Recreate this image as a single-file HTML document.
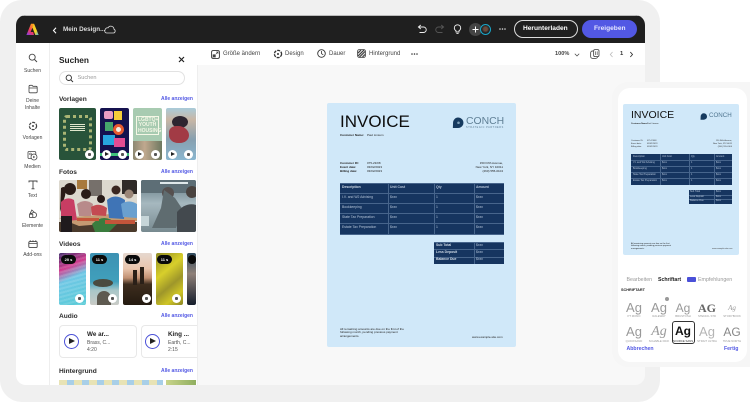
<!DOCTYPE html>
<html><head><meta charset="utf-8"><style>
*{box-sizing:border-box;margin:0;padding:0}
html,body{width:750px;height:402px;background:#fff;overflow:hidden}
body{position:relative;font-family:"Liberation Sans",sans-serif;color:#2c2c2c}
.a{position:absolute}
.t{position:absolute;white-space:nowrap;line-height:1}
.h{font-size:6.6px;font-weight:bold;color:#2c2c2c}
.l{font-size:5px;color:#5258e4;font-weight:bold;left:161px}
.rl{font-size:5px;color:#444;text-align:center;width:33px;left:16px;line-height:7.2px;white-space:normal}
.tb{font-size:6px;color:#444}
.th{border-radius:2px;overflow:hidden;position:absolute;filter:blur(.25px)}
.c{position:absolute;border-radius:50%;background:#fff;width:9px;height:9px}
.c:after{content:"";position:absolute;left:3px;top:3px;width:3px;height:3px;background:#555;border-radius:1px}
.p:after{left:3.2px;top:2.2px;width:0;height:0;background:none;border-left:4px solid #222;border-top:2.3px solid transparent;border-bottom:2.3px solid transparent;border-radius:0}
.b{position:absolute;background:#0a0a0a;color:#fff;font-size:4px;font-weight:bold;border-radius:5px;height:9px;line-height:9px;text-align:center}
svg{position:absolute;overflow:visible}
.tbl{position:absolute;background:#163560}
.cell{position:absolute;color:#b4c4d8;white-space:nowrap;line-height:1}
.ln{position:absolute;background:#47658c}
.ag{position:absolute;text-align:center;color:#999;line-height:1}
.cap{position:absolute;text-align:center;color:#999;font-size:2.8px;white-space:nowrap;line-height:1}
</style></head><body>
<div class="a" style="left:0;top:0;width:660px;height:402px;background:#f0f0f0;border-radius:22px"></div>
<div class="a" style="left:16px;top:15px;width:629px;height:370px;background:#f8f8f8;border-radius:10px;overflow:hidden">
<div class="a" style="left:0;top:0;width:629px;height:27.5px;background:#1f1f1f;border-top:1px solid #bbb"></div>
<div class="a" style="left:0;top:27.5px;width:629px;height:1.5px;background:#111"></div>
<div class="a" style="left:0;top:28px;width:629px;height:22px;background:#fff"></div>
<div class="a" style="left:0;top:28px;width:182px;height:342px;background:#fff"></div>
<div class="a" style="left:33px;top:28px;width:1px;height:342px;background:#eee"></div>
<div class="a" style="left:181px;top:50px;width:1px;height:320px;background:#eee"></div>
</div>

<!-- top bar -->
<svg style="left:26px;top:23px" width="13" height="13" viewBox="0 0 13 13"><defs><linearGradient id="g" x1="0" y1="1" x2="1" y2="0"><stop offset="0" stop-color="#7b3ff2"/><stop offset=".35" stop-color="#f03a5f"/><stop offset=".7" stop-color="#ff9a1f"/><stop offset="1" stop-color="#ffd11f"/></linearGradient><linearGradient id="g2" x1="0" y1="0" x2="1" y2="1"><stop offset="0" stop-color="#f5c623"/><stop offset=".6" stop-color="#f5d623"/><stop offset="1" stop-color="#43b6e8"/></linearGradient></defs><path d="M5 .8H8L12.6 12H9.4L6.5 4.6 4.6 9H7.2L8 12H.4Z" fill="url(#g)"/><path d="M8 .8L12.6 12H9.4L6.5 4.6Z" fill="url(#g2)"/></svg>
<svg style="left:52px;top:26.5px" width="6" height="7" viewBox="0 0 6 7"><path d="M4 .8L1.5 3.5 4 6.2" fill="none" stroke="#fff" stroke-width="1.1"/></svg>
<div class="t" style="left:63px;top:26.7px;font-size:6.3px;color:#ddd;font-weight:bold">Mein Design...</div>
<svg style="left:104px;top:25px" width="12" height="9" viewBox="0 0 12 9"><path d="M3 8H9.5A2 2 0 0 0 10 4.2 3.2 3.2 0 0 0 4 2.8 2.6 2.6 0 0 0 1 5 2 2 0 0 0 3 8Z" fill="none" stroke="#ddd" stroke-width=".8"/></svg>
<svg style="left:417px;top:24px" width="10" height="10" viewBox="0 0 10 10"><path d="M3.8 1L1.4 3 3.8 5M1.4 3H6.5A2.7 2.7 0 0 1 6.5 8.5H2.5" fill="none" stroke="#eee" stroke-width=".9"/></svg>
<svg style="left:435px;top:24px" width="10" height="10" viewBox="0 0 10 10"><path d="M6.2 1L8.6 3 6.2 5M8.6 3H3.5A2.7 2.7 0 0 0 3.5 8.5H7.5" fill="none" stroke="#555" stroke-width=".9"/></svg>
<svg style="left:453px;top:24px" width="9" height="11" viewBox="0 0 9 11"><path d="M3 8H6V6.8C7.2 6 7.7 5 7.7 4A3.2 3.2 0 0 0 1.3 4C1.3 5 1.8 6 3 6.8ZM3.4 9.6H5.6" fill="none" stroke="#eee" stroke-width=".9"/></svg>
<div class="a" style="left:469px;top:23px;width:13px;height:13px;border-radius:50%;background:#444"></div>
<svg style="left:472px;top:26px" width="7" height="7" viewBox="0 0 7 7"><path d="M3.5 .5V6.5M.5 3.5H6.5" stroke="#fff" stroke-width="1"/></svg>
<div class="a" style="left:480px;top:24px;width:11px;height:11px;border-radius:50%;background:radial-gradient(circle at 50% 45%,#6a4a3c 0 28%,#222 55%);border:1.3px solid #1aa6c9"></div>
<svg style="left:499px;top:28px" width="7" height="2" viewBox="0 0 7 2"><circle cx="1" cy="1" r=".8" fill="#ddd"/><circle cx="3.5" cy="1" r=".8" fill="#ddd"/><circle cx="6" cy="1" r=".8" fill="#ddd"/></svg>
<div class="a" style="left:514px;top:20px;width:64px;height:18px;border-radius:9px;border:1.2px solid #ddd"></div>
<div class="t" style="left:523px;top:25.7px;font-size:6.6px;font-weight:bold;color:#fff">Herunterladen</div>
<div class="a" style="left:582px;top:20px;width:55px;height:18px;border-radius:9px;background:#5258e4"></div>
<div class="t" style="left:594px;top:25.7px;font-size:6.6px;font-weight:bold;color:#e4e6ff">Freigeben</div>

<!-- toolbar -->
<svg style="left:211px;top:49.5px" width="9" height="9" viewBox="0 0 9 9"><rect x=".6" y=".6" width="7.8" height="7.8" rx="1.5" fill="none" stroke="#333" stroke-width=".9"/><rect x="1.7" y="4.4" width="3" height="3" fill="#444"/><path d="M5 4L7 2M5.2 2H7V3.8" fill="none" stroke="#444" stroke-width=".7"/></svg>
<div class="t tb" style="left:223px;top:50.5px">Größe ändern</div>
<svg style="left:273px;top:49px" width="10" height="10" viewBox="0 0 10 10"><circle cx="5" cy="5" r="3.6" fill="none" stroke="#333" stroke-width="1.3" stroke-dasharray="3 1"/><circle cx="5" cy="5" r="1" fill="#333"/></svg>
<div class="t tb" style="left:285px;top:50.5px">Design</div>
<svg style="left:317px;top:49px" width="9" height="9" viewBox="0 0 9 9"><circle cx="4.5" cy="4.5" r="3.8" fill="none" stroke="#333" stroke-width=".9"/><path d="M4.5 2V4.7L6.3 5.8" fill="none" stroke="#333" stroke-width=".8"/></svg>
<div class="t tb" style="left:329px;top:50.5px">Dauer</div>
<svg style="left:357px;top:49px" width="9" height="9" viewBox="0 0 9 9"><rect x=".5" y=".5" width="8" height="8" rx="2" fill="#ddd" stroke="#444" stroke-width=".8"/><path d="M1 4L4 1M1 7L7 1M2.5 8L8 2.5M5.5 8L8 5.5" stroke="#333" stroke-width=".9"/></svg>
<div class="t tb" style="left:369px;top:50.5px">Hintergrund</div>
<svg style="left:411px;top:53px" width="7" height="2" viewBox="0 0 7 2"><circle cx="1" cy="1" r=".8" fill="#333"/><circle cx="3.5" cy="1" r=".8" fill="#333"/><circle cx="6" cy="1" r=".8" fill="#333"/></svg>
<div class="t" style="left:555px;top:52px;font-size:5.6px;font-weight:bold;color:#444">100%</div>
<svg style="left:574px;top:52.5px" width="6" height="4" viewBox="0 0 6 4"><path d="M.8 .8L3 3 5.2 .8" fill="none" stroke="#444" stroke-width=".7"/></svg>
<svg style="left:590px;top:49px" width="10" height="10" viewBox="0 0 10 10"><rect x=".6" y="2" width="7" height="7.4" rx="2" fill="none" stroke="#555" stroke-width=".9"/><rect x="3.6" y=".6" width="5.4" height="7" rx="1.5" fill="#fff" stroke="#555" stroke-width=".9"/><path d="M5.4 2.4V6M7.2 2.4V6" stroke="#555" stroke-width=".7"/></svg>
<svg style="left:609px;top:51px" width="5" height="7" viewBox="0 0 5 7"><path d="M3.5 1L1.3 3.5 3.5 6" fill="none" stroke="#bbb" stroke-width=".8"/></svg>
<div class="t" style="left:620px;top:52px;font-size:5.8px;font-weight:bold;color:#333">1</div>
<svg style="left:629px;top:51px" width="5" height="7" viewBox="0 0 5 7"><path d="M1.3 1L3.5 3.5 1.3 6" fill="none" stroke="#333" stroke-width=".9"/></svg>

<!-- rail -->
<svg style="left:28px;top:53px" width="10" height="10" viewBox="0 0 10 10"><circle cx="4.2" cy="4.2" r="3" fill="none" stroke="#444" stroke-width=".9"/><path d="M6.4 6.4L9 9" stroke="#444" stroke-width="1"/></svg>
<div class="t rl" style="top:67.5px">Suchen</div>
<svg style="left:28px;top:84px" width="10" height="10" viewBox="0 0 10 10"><path d="M1 2.5Q1 1.3 2.2 1.3H4L5 2.3H8Q9.2 2.3 9.2 3.5V7.6Q9.2 8.8 8 8.8H2.2Q1 8.8 1 7.6ZM1 4H9.2" fill="none" stroke="#444" stroke-width=".8"/></svg>
<div class="t rl" style="top:97.5px">Deine<br>Inhalte</div>
<svg style="left:28px;top:121px" width="10" height="10" viewBox="0 0 10 10"><circle cx="5" cy="5" r="3.6" fill="none" stroke="#444" stroke-width="1.2" stroke-dasharray="3 1"/><circle cx="5" cy="5" r="1" fill="#444"/></svg>
<div class="t rl" style="top:134.5px">Vorlagen</div>
<svg style="left:27px;top:150px" width="11" height="11" viewBox="0 0 11 11"><path d="M2 1.5H7.5Q8.8 1.5 8.8 2.8V4.5M4.5 8.5H2Q1 8.5 1 7.5V2.5Q1 1.5 2 1.5" fill="none" stroke="#444" stroke-width=".8"/><circle cx="7" cy="7" r="3" fill="#fff" stroke="#444" stroke-width=".8"/><path d="M6.2 5.8L8.2 7 6.2 8.2Z" fill="#444"/><circle cx="3.5" cy="4" r=".9" fill="none" stroke="#444" stroke-width=".6"/></svg>
<div class="t rl" style="top:163.5px">Medien</div>
<svg style="left:28px;top:180px" width="10" height="10" viewBox="0 0 10 10"><path d="M1 2.4V1H9V2.4M5 1V8.8M3.5 8.8H6.5" fill="none" stroke="#444" stroke-width=".9"/></svg>
<div class="t rl" style="top:193px">Text</div>
<svg style="left:28px;top:209px" width="10" height="10" viewBox="0 0 10 10"><path d="M4.2 1L6.6 4.2H1.8Z" fill="none" stroke="#444" stroke-width=".8" transform="rotate(-10 4 3)"/><circle cx="6" cy="6" r="2.6" fill="#fff" stroke="#444" stroke-width=".8"/><rect x="1.6" y="5.2" width="3.2" height="3.2" fill="#fff" stroke="#444" stroke-width=".8"/></svg>
<div class="t rl" style="top:222.5px">Elemente</div>
<svg style="left:28px;top:238.5px" width="10" height="10" viewBox="0 0 10 10"><rect x=".8" y="2.6" width="8.4" height="6" rx="1.2" fill="none" stroke="#444" stroke-width=".9"/><path d="M2.2 2.6V1.2M5 2.6V1.2M7.8 2.6V1.2M1 4.6H9" stroke="#444" stroke-width=".8"/></svg>
<div class="t rl" style="top:252px">Add-ons</div>

<!-- panel -->
<div class="t" style="left:59px;top:56px;font-size:8.3px;font-weight:bold;color:#222">Suchen</div>
<svg style="left:177.5px;top:55.5px" width="7" height="7" viewBox="0 0 7 7"><path d="M1 1L6 6M6 1L1 6" stroke="#222" stroke-width="1.2"/></svg>
<div class="a" style="left:59px;top:71px;width:126px;height:14px;border-radius:7px;border:1px solid #e2e2e2"></div>
<svg style="left:65px;top:73.5px" width="9" height="9" viewBox="0 0 9 9"><circle cx="3.8" cy="3.8" r="2.7" fill="none" stroke="#333" stroke-width=".9"/><path d="M5.8 5.8L8 8" stroke="#333" stroke-width="1"/></svg>
<div class="t" style="left:77.5px;top:75.5px;font-size:5.6px;color:#999">Suchen</div>

<div class="t h" style="left:59px;top:97px">Vorlagen</div>
<div class="t l" style="top:97px">Alle anzeigen</div>
<div class="th" style="left:59px;top:108px;width:37px;height:52px;background:#28533a"><div class="a" style="left:4px;top:7px;width:29px;height:36px;border:3px dotted #a9b474;border-radius:4px"></div><div class="a" style="left:11px;top:16px;width:15px;height:8px;background:repeating-linear-gradient(#e0e6cc 0 1px,transparent 1px 2px)"></div></div>
<div class="c" style="left:85px;top:150px"></div>
<div class="th" style="left:100px;top:108px;width:29px;height:52px;background:#15124f"><div class="a" style="left:4px;top:3px;width:9px;height:8px;background:#e99cc4;border-radius:2px"></div><div class="a" style="left:14px;top:3px;width:8px;height:9px;background:#f5cd39"></div><div class="a" style="left:5px;top:14px;width:8px;height:9px;background:#46a46c"></div><div class="a" style="left:13px;top:16px;width:11px;height:11px;background:#f1efe6;border-radius:50%;border:3px solid #e85a2e"></div><div class="a" style="left:3px;top:27px;width:12px;height:10px;background:#27a6df"></div><div class="a" style="left:14px;top:30px;width:11px;height:9px;background:#e34c92"></div><div class="a" style="left:0;top:45px;width:29px;height:3px;background:#40c17c"></div></div>
<div class="c p" style="left:101.5px;top:150px"></div><div class="c" style="left:118px;top:150px"></div>
<div class="th" style="left:133px;top:108px;width:29px;height:52px;background:#a8cbb1"><div class="a" style="left:3px;top:8px;width:23px;height:19px;border:.5px solid #f5f7e6;background:#a8cbb1"></div><div class="t" style="left:5px;top:9.5px;font-size:5px;font-weight:bold;color:#f3f6e5;line-height:5.6px;text-align:center;width:19px">LGBTQ+<br>YOUTH<br>HOUSING</div><div class="a" style="left:0;top:33px;width:29px;height:19px;background:linear-gradient(90deg,#8d8872,#c0a88e 40%,#6d7860)"></div></div>
<div class="c p" style="left:134.5px;top:150px"></div><div class="c" style="left:151px;top:150px"></div>
<div class="th" style="left:166px;top:108px;width:30px;height:52px;background:linear-gradient(#a9cbd9,#c9b7a6 22%,#87a0b0 60%,#8bb7d0)"><div class="a" style="left:6px;top:8px;width:16px;height:12px;background:#2d2530;border-radius:50%"></div><div class="a" style="left:3px;top:18px;width:20px;height:17px;background:#a23b45;border-radius:40% 60% 50% 50%"></div></div>
<div class="c p" style="left:167.5px;top:150px"></div><div class="c" style="left:184px;top:150px"></div>

<div class="t h" style="left:59px;top:169.5px">Fotos</div>
<div class="t l" style="top:169.5px">Alle anzeigen</div>
<div class="th" style="left:59px;top:180px;width:78px;height:52px;background:#d8d3c8">
<svg style="left:0;top:0" width="78" height="52" viewBox="0 0 78 52"><rect width="78" height="52" fill="#dcd8ce"/><rect x="18" y="0" width="10" height="9" fill="#a87a3e"/><rect x="30" y="0" width="13" height="16" fill="#76706b"/><rect x="63" y="0" width="15" height="14" fill="#2f2a28"/><path d="M0 42H78V52H0Z" fill="#4a3a2c"/><path d="M0 38L78 32V41L20 46Z" fill="#c49a72"/><path d="M33 44Q45 32 58 44L50 52H36Z" fill="#3a7c3e"/><path d="M18 38H40V41H18ZM46 40H76V44H46Z" fill="#c4553a"/><circle cx="11" cy="9" r="6" fill="#2a1c18"/><path d="M2 8Q8 4 6 16L1 32Z" fill="#2a1c18"/><path d="M2 22Q8 16 15 20L18 40 8 41 2 36Z" fill="#c83d63"/><path d="M2 36H13V52H2Z" fill="#1f1a1d"/><circle cx="27" cy="14" r="5" fill="#2a1c18"/><path d="M18 24Q26 18 34 24L32 36 20 36Z" fill="#b88a8a"/><circle cx="42" cy="19" r="4" fill="#271917"/><path d="M32 27Q40 22 48 28L47 36 33 35Z" fill="#c44a52"/><circle cx="57" cy="10" r="4.5" fill="#3a2620"/><path d="M48 20Q56 13 66 20L65 39 50 38Z" fill="#3f74b6"/><circle cx="70" cy="14" r="4.5" fill="#9a8678"/><path d="M62 24Q70 19 78 24V38L64 37Z" fill="#6aa0cf"/></svg></div>
<div class="th" style="left:141px;top:180px;width:55px;height:52px;background:linear-gradient(#5f7580,#a6b8bf 45%,#77898f)">
<svg style="left:0;top:0" width="55" height="52" viewBox="0 0 55 52"><rect x="0" y="0" width="55" height="13" fill="#5d6e76"/><rect x="19" y="2" width="28" height="2" fill="#dfe8ea"/><circle cx="27" cy="13" r="6" fill="#56504f"/><path d="M23 10L20 28 11 48H35L42 30 34 18Z" fill="#5f6c70"/><circle cx="51" cy="12" r="6" fill="#4a4340"/><path d="M36 32Q45 22 55 25V52H36Z" fill="#43494e"/><rect x="0" y="36" width="8" height="10" fill="#c6d5d8"/></svg></div>

<div class="t h" style="left:59px;top:241.5px">Videos</div>
<div class="t l" style="top:241.5px">Alle anzeigen</div>
<div class="th" style="left:59px;top:253px;width:27px;height:52px;background:repeating-linear-gradient(165deg,transparent 0 2px,rgba(255,255,255,.12) 2px 4px),linear-gradient(155deg,#402a6a 0,#d13d8f 28%,#6fc7e5 48%,#58cbd6 100%)"></div>
<div class="th" style="left:90px;top:253px;width:29px;height:52px;background:linear-gradient(#3d92b3,#40a0bc 55%,#a9c7c8 72%,#c9cbc6)"><div class="a" style="left:3px;top:26px;width:20px;height:8px;background:#4a4b3f;border-radius:50%"></div><div class="a" style="left:7px;top:38px;width:14px;height:14px;background:#5e5a50;border-radius:50% 50% 0 0"></div></div>
<div class="th" style="left:123px;top:253px;width:29px;height:52px;background:linear-gradient(#e6d8cf,#e9c5ad 30%,#c19072 48%,#3d2d1e 60%,#241a10)"><div class="a" style="left:10px;top:17px;width:4px;height:15px;background:#2a2018"></div><div class="a" style="left:17px;top:14px;width:4px;height:17px;background:#2a2018"></div></div>
<div class="th" style="left:156px;top:253px;width:27px;height:52px;background:linear-gradient(140deg,#8f8a25,#d8cf2b 35%,#9e962a 60%,#cfc526 80%,#8a8424)"></div>
<div class="th" style="left:187px;top:253px;width:9px;height:52px;background:linear-gradient(#2f4a5e,#8f8078 40%,#151d2c)"></div>
<div class="b" style="left:61px;top:255px;width:15px">20 s</div>
<div class="b" style="left:92px;top:255px;width:15px">11 s</div>
<div class="b" style="left:125px;top:255px;width:15px">14 s</div>
<div class="b" style="left:157px;top:255px;width:15px">11 s</div>
<div class="b" style="left:188px;top:255px;width:8px"></div>
<div class="c" style="left:75px;top:294px"></div><div class="c" style="left:108px;top:294px"></div><div class="c" style="left:141.5px;top:294px"></div><div class="c" style="left:172px;top:294px"></div>

<div class="t h" style="left:59px;top:314px">Audio</div>
<div class="t l" style="top:314px">Alle anzeigen</div>
<div class="a" style="left:59px;top:325px;width:78px;height:33px;border:1px solid #e8e8e8;border-radius:4px"></div>
<div class="a" style="left:141px;top:325px;width:56px;height:33px;border:1px solid #e8e8e8;border-right:none;border-radius:4px 0 0 4px"></div>
<div class="a" style="left:63.5px;top:334px;width:15px;height:15px;border-radius:50%;border:1.5px solid #4a50d8"></div>
<div class="a" style="left:68.5px;top:338px;width:0;height:0;border-left:6px solid #222;border-top:3.5px solid transparent;border-bottom:3.5px solid transparent"></div>
<div class="a" style="left:145px;top:334px;width:15px;height:15px;border-radius:50%;border:1.5px solid #4a50d8"></div>
<div class="a" style="left:150px;top:338px;width:0;height:0;border-left:6px solid #222;border-top:3.5px solid transparent;border-bottom:3.5px solid transparent"></div>
<div class="t" style="left:87px;top:331.5px;font-size:6.3px;font-weight:bold;color:#222">We ar...</div>
<div class="t" style="left:87px;top:340.5px;font-size:5px;color:#555">Brass, C...</div>
<div class="t" style="left:87px;top:347.5px;font-size:5px;color:#555">4:20</div>
<div class="t" style="left:168px;top:331.5px;font-size:6.3px;font-weight:bold;color:#222">King ...</div>
<div class="t" style="left:168px;top:340.5px;font-size:5px;color:#555">Earth, C...</div>
<div class="t" style="left:168px;top:347.5px;font-size:5px;color:#555">2:15</div>

<div class="t h" style="left:59px;top:369px">Hintergrund</div>
<div class="t l" style="top:369px">Alle anzeigen</div>
<div class="a" style="left:59px;top:380px;width:104px;height:5px;background:repeating-linear-gradient(90deg,#e8e3b5 0 8px,#a8cfe8 8px 15px)"></div>
<div class="a" style="left:166px;top:380px;width:30px;height:5px;background:linear-gradient(90deg,#c9d48a,#8fae5f)"></div>

<!-- invoice -->
<div class="a" style="left:327px;top:103px;width:189px;height:244px;background:#d0e8f9;border-radius:2px"></div>
<div class="t" style="left:340px;top:113px;font-size:17px;color:#0c0c0c">INVOICE</div>
<svg style="left:452px;top:116.5px" width="13" height="11.5" viewBox="0 0 15 13"><path d="M1 12.5H7A6 6 0 1 0 1.2 7Z" fill="#163a5f"/><circle cx="7.5" cy="6.5" r="1.5" fill="#7f9fb8"/></svg>
<div class="t" style="left:466px;top:116.5px;font-size:10.4px;color:#5f7f95">CONCH</div>
<div class="t" style="left:466px;top:126.5px;font-size:2.4px;color:#5a7a92;letter-spacing:.6px">STRATEGIC PARTNERS</div>
<div class="t" style="left:340px;top:134px;font-size:3px;font-weight:bold;color:#222">Customer Name:</div>
<div class="t" style="left:367px;top:134px;font-size:3px;color:#222">Paul Linsum</div>
<div class="t" style="left:340px;top:160.5px;font-size:3px;font-weight:bold;color:#222;line-height:4.2px;white-space:normal;width:25px">Customer ID:<br>Event date:<br>Billing date:</div>
<div class="t" style="left:367px;top:160.5px;font-size:3px;color:#222;line-height:4.2px;white-space:normal;width:25px">075-23/08<br>03/02/2023<br>03/02/2023</div>
<div class="t" style="left:463px;top:160.5px;width:40px;font-size:3px;color:#222;line-height:4.2px;text-align:right;white-space:normal">150 Fifth Avenue,<br>New York, NY 10011<br>(260) 555-0104</div>

<div class="tbl" style="left:340px;top:183px;width:164px;height:51px"></div>
<div class="ln" style="left:340px;top:183px;width:164px;height:.5px"></div><div class="ln" style="left:340px;top:193px;width:164px;height:.5px"></div><div class="ln" style="left:340px;top:203px;width:164px;height:.5px"></div><div class="ln" style="left:340px;top:213px;width:164px;height:.5px"></div><div class="ln" style="left:340px;top:223px;width:164px;height:.5px"></div><div class="ln" style="left:340px;top:233.5px;width:164px;height:.5px"></div>
<div class="ln" style="left:388px;top:183px;width:.5px;height:51px"></div><div class="ln" style="left:434px;top:183px;width:.5px;height:51px"></div><div class="ln" style="left:474px;top:183px;width:.5px;height:51px"></div>
<div class="cell" style="left:342px;top:185.5px;font-size:3.4px;color:#d0dbe7;font-weight:bold">Description</div><div class="cell" style="left:390px;top:185.5px;font-size:3.4px;font-weight:bold">Unit Cost</div><div class="cell" style="left:436px;top:185.5px;font-size:3.4px;font-weight:bold">Qty</div><div class="cell" style="left:476px;top:185.5px;font-size:3.4px;font-weight:bold">Amount</div>
<div class="cell" style="left:342px;top:195.5px;font-size:3.4px">I.V. and W2 Advising</div><div class="cell" style="left:390px;top:195.5px;font-size:3.4px">$xxx</div><div class="cell" style="left:436px;top:195.5px;font-size:3.4px">1</div><div class="cell" style="left:476px;top:195.5px;font-size:3.4px">$xxx</div>
<div class="cell" style="left:342px;top:205.5px;font-size:3.4px">Bookkeeping</div><div class="cell" style="left:390px;top:205.5px;font-size:3.4px">$xxx</div><div class="cell" style="left:436px;top:205.5px;font-size:3.4px">1</div><div class="cell" style="left:476px;top:205.5px;font-size:3.4px">$xxx</div>
<div class="cell" style="left:342px;top:215.5px;font-size:3.4px">State Tax Preparation</div><div class="cell" style="left:390px;top:215.5px;font-size:3.4px">$xxx</div><div class="cell" style="left:436px;top:215.5px;font-size:3.4px">1</div><div class="cell" style="left:476px;top:215.5px;font-size:3.4px">$xxx</div>
<div class="cell" style="left:342px;top:225.5px;font-size:3.4px">Estate Tax Preparation</div><div class="cell" style="left:390px;top:225.5px;font-size:3.4px">$xxx</div><div class="cell" style="left:436px;top:225.5px;font-size:3.4px">1</div><div class="cell" style="left:476px;top:225.5px;font-size:3.4px">$xxx</div>

<div class="tbl" style="left:434px;top:242px;width:70px;height:22px"></div>
<div class="ln" style="left:434px;top:242px;width:70px;height:.5px"></div><div class="ln" style="left:434px;top:249px;width:70px;height:.5px"></div><div class="ln" style="left:434px;top:256.5px;width:70px;height:.5px"></div><div class="ln" style="left:474px;top:242px;width:.5px;height:22px"></div>
<div class="cell" style="left:436px;top:243.7px;font-size:3.4px;font-weight:bold;color:#d0dbe7">Sub Total</div><div class="cell" style="left:476px;top:243.7px;font-size:3.4px">$xxx</div>
<div class="cell" style="left:436px;top:251px;font-size:3.4px;font-weight:bold;color:#d0dbe7">Less Deposit</div><div class="cell" style="left:476px;top:251px;font-size:3.4px">$xxx</div>
<div class="cell" style="left:436px;top:258px;font-size:3.4px;font-weight:bold;color:#d0dbe7">Balance Due</div><div class="cell" style="left:476px;top:258px;font-size:3.4px">$xxx</div>
<div class="t" style="left:340px;top:327.5px;font-size:3px;color:#222;line-height:3.6px">All remaining amounts are due on the first of the<br>following month, pending previous payment<br>arrangements.</div>
<div class="t" style="left:472px;top:335.5px;font-size:3px;color:#222">www.example-site.com</div>

<!-- phone -->
<div class="a" style="left:612px;top:82px;width:138px;height:285px;background:#f6f6f6;border-radius:16px 0 0 16px"></div>
<div class="a" style="left:618px;top:88px;width:129px;height:274px;background:#fff;border-radius:12px"></div>
<div class="a" style="left:623px;top:104px;width:116px;height:151px;background:#d0e8f9;border-radius:2px"></div>
<div class="t" style="left:631px;top:109.5px;font-size:10.5px;color:#111">INVOICE</div>
<svg style="left:700px;top:113px" width="8" height="7" viewBox="0 0 15 13"><path d="M1 12.5H7A6 6 0 1 0 1.2 7Z" fill="#163a5f"/></svg>
<div class="t" style="left:709px;top:113px;font-size:6.2px;color:#4f7590">CONCH</div>
<div class="t" style="left:631px;top:123px;font-size:2.1px;font-weight:bold;color:#222">Customer Name:</div>
<div class="t" style="left:647px;top:123px;font-size:2.1px;color:#222">Paul Linsum</div>
<div class="t" style="left:631px;top:140px;font-size:2.1px;color:#333;line-height:2.8px;white-space:normal;width:16px">Customer ID:<br>Event date:<br>Billing date:</div>
<div class="t" style="left:647px;top:140px;font-size:2.1px;color:#333;line-height:2.8px;white-space:normal;width:16px">075-23/08<br>03/02/2023<br>03/02/2023</div>
<div class="t" style="left:705px;top:140px;width:27px;font-size:2.1px;color:#333;line-height:2.8px;text-align:right;white-space:normal">150 Fifth Avenue,<br>New York, NY 10011<br>(260) 555-0104</div>
<div class="tbl" style="left:631px;top:154px;width:101px;height:30.5px"></div>
<div class="ln" style="left:631px;top:160px;width:101px;height:.5px"></div><div class="ln" style="left:631px;top:166px;width:101px;height:.5px"></div><div class="ln" style="left:631px;top:172px;width:101px;height:.5px"></div><div class="ln" style="left:631px;top:178px;width:101px;height:.5px"></div>
<div class="ln" style="left:660px;top:154px;width:.5px;height:30.5px"></div><div class="ln" style="left:689px;top:154px;width:.5px;height:30.5px"></div><div class="ln" style="left:714px;top:154px;width:.5px;height:30.5px"></div>
<div class="cell" style="left:633px;top:155.5px;font-size:2.4px">Description</div><div class="cell" style="left:662px;top:155.5px;font-size:2.4px">Unit Cost</div><div class="cell" style="left:691px;top:155.5px;font-size:2.4px">Qty</div><div class="cell" style="left:716px;top:155.5px;font-size:2.4px">Amount</div>
<div class="cell" style="left:633px;top:161.5px;font-size:2.4px">I.V. and W2 Advising</div><div class="cell" style="left:662px;top:161.5px;font-size:2.4px">$xxx</div><div class="cell" style="left:691px;top:161.5px;font-size:2.4px">1</div><div class="cell" style="left:716px;top:161.5px;font-size:2.4px">$xxx</div>
<div class="cell" style="left:633px;top:167.5px;font-size:2.4px">Bookkeeping</div><div class="cell" style="left:662px;top:167.5px;font-size:2.4px">$xxx</div><div class="cell" style="left:691px;top:167.5px;font-size:2.4px">1</div><div class="cell" style="left:716px;top:167.5px;font-size:2.4px">$xxx</div>
<div class="cell" style="left:633px;top:173.5px;font-size:2.4px">State Tax Preparation</div><div class="cell" style="left:662px;top:173.5px;font-size:2.4px">$xxx</div><div class="cell" style="left:691px;top:173.5px;font-size:2.4px">1</div><div class="cell" style="left:716px;top:173.5px;font-size:2.4px">$xxx</div>
<div class="cell" style="left:633px;top:179.5px;font-size:2.4px">Estate Tax Preparation</div><div class="cell" style="left:662px;top:179.5px;font-size:2.4px">$xxx</div><div class="cell" style="left:691px;top:179.5px;font-size:2.4px">1</div><div class="cell" style="left:716px;top:179.5px;font-size:2.4px">$xxx</div>
<div class="tbl" style="left:689px;top:190px;width:43px;height:14px"></div>
<div class="ln" style="left:689px;top:194.5px;width:43px;height:.5px"></div><div class="ln" style="left:689px;top:199px;width:43px;height:.5px"></div><div class="ln" style="left:714px;top:190px;width:.5px;height:14px"></div>
<div class="cell" style="left:690px;top:191px;font-size:2.4px">Sub Total</div><div class="cell" style="left:716px;top:191px;font-size:2.4px">$xxx</div>
<div class="cell" style="left:690px;top:195.5px;font-size:2.4px">Less Deposit</div><div class="cell" style="left:716px;top:195.5px;font-size:2.4px">$xxx</div>
<div class="cell" style="left:690px;top:200px;font-size:2.4px">Balance Due</div><div class="cell" style="left:716px;top:200px;font-size:2.4px">$xxx</div>
<div class="t" style="left:631px;top:243px;font-size:2.1px;color:#222;line-height:2.4px">All remaining amounts are due on the first<br>following month, pending previous payment<br>arrangements.</div>
<div class="t" style="left:712px;top:248px;font-size:2px;color:#444">www.example-site.com</div>

<div class="t" style="left:626.5px;top:277.5px;font-size:5.3px;color:#999">Bearbeiten</div>
<div class="t" style="left:658px;top:277.5px;font-size:5.2px;font-weight:bold;color:#222">Schriftart</div>
<div class="a" style="left:686.5px;top:276.5px;width:9.5px;height:5.5px;background:#4a50d8;border-radius:1px"></div>
<div class="t" style="left:698px;top:277.5px;font-size:5.3px;color:#999">Empfehlungen</div>
<div class="t" style="left:621px;top:288.5px;font-size:3.8px;font-weight:bold;color:#222">SCHRIFTART</div>

<div class="ag" style="left:623px;top:301px;width:22px;font-size:13px">Ag</div><div class="cap" style="left:623px;top:315px;width:22px">PT MONO</div>
<div class="ag" style="left:648px;top:301px;width:22px;font-size:13px">Ag</div><div class="cap" style="left:648px;top:315px;width:22px">RALEWAY</div>
<div class="a" style="left:665px;top:297px;width:4px;height:4px;border-radius:50%;background:#999"></div>
<div class="ag" style="left:672px;top:302px;width:22px;font-size:12px">Ag</div><div class="cap" style="left:672px;top:315px;width:22px">BRUSTOSH</div>
<div class="ag" style="left:696px;top:302px;width:22px;font-size:12px;font-weight:bold;font-family:'Liberation Serif',serif;color:#666">AG</div><div class="cap" style="left:696px;top:315px;width:22px">STENCIL STD</div>
<div class="ag" style="left:721px;top:305px;width:22px;font-size:7px;font-family:'Liberation Serif',serif;font-style:italic">Ag</div><div class="cap" style="left:721px;top:315px;width:22px">STORYBOOK</div>
<div class="ag" style="left:623px;top:325px;width:22px;font-size:13px">Ag</div><div class="cap" style="left:623px;top:340px;width:22px">QUICKSAND</div>
<div class="ag" style="left:648px;top:325px;width:22px;font-size:14px;font-family:'Liberation Serif',serif;font-style:italic">Ag</div><div class="cap" style="left:648px;top:340px;width:22px">SCHABLE DICK</div>
<div class="a" style="left:671.5px;top:321px;width:23px;height:22.5px;border:1.2px solid #333;border-radius:3px"></div>
<div class="ag" style="left:672px;top:325px;width:22px;font-size:12px;font-weight:bold;color:#111">Ag</div><div class="cap" style="left:672px;top:339.5px;width:22px;color:#333">SOURCE SANS</div>
<div class="ag" style="left:696px;top:325px;width:22px;font-size:13px;color:#b5b5b5">Ag</div><div class="cap" style="left:696px;top:340px;width:22px">STRAIT ULTRA</div>
<div class="ag" style="left:721px;top:326px;width:22px;font-size:12px;color:#888">AG</div><div class="cap" style="left:721px;top:340px;width:22px">TRUE NORTH</div>
<div class="t" style="left:626.5px;top:346.5px;font-size:5.2px;font-weight:bold;color:#5258e4">Abbrechen</div>
<div class="t" style="left:724px;top:346.5px;font-size:5.2px;font-weight:bold;color:#5258e4">Fertig</div>
</body></html>
